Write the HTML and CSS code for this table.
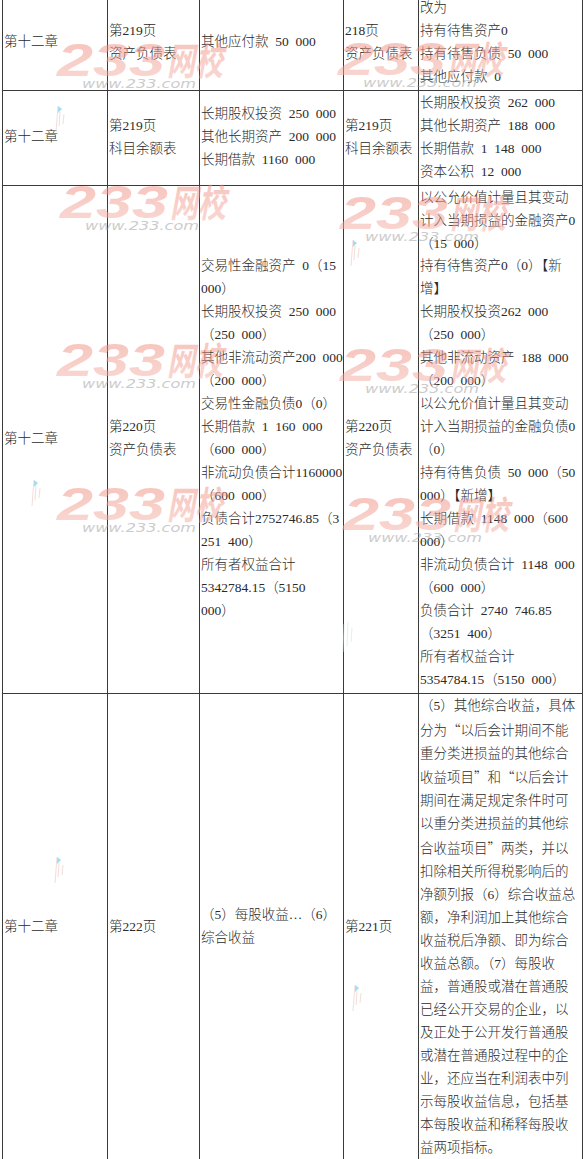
FILE: index.html
```html
<!DOCTYPE html>
<html lang="zh-CN">
<head>
<meta charset="utf-8">
<title>第十二章 勘误表</title>
<link rel="stylesheet" href="styles.css">
</head>
<body>
<div class="page">
  <table class="sheet">
    <colgroup>
      <col class="c-chapter">
      <col class="c-page">
      <col class="c-orig">
      <col class="c-page2">
      <col class="c-new">
    </colgroup>
    <tbody>
      <tr class="r1">
        <td>第十二章</td>
        <td>第219页<br>资产负债表</td>
        <td>其他应付款 50 000</td>
        <td>218页<br>资产负债表</td>
        <td>改为<br>持有待售资产0<br>持有待售负债 50 000<br>其他应付款 0</td>
      </tr>
      <tr class="r2">
        <td>第十二章</td>
        <td>第219页<br>科目余额表</td>
        <td>长期股权投资 250 000<br>其他长期资产 200 000<br>长期借款 1160 000</td>
        <td>第219页<br>科目余额表</td>
        <td>长期股权投资 262 000<br>其他长期资产 188 000<br>长期借款 1 148 000<br>资本公积 12 000</td>
      </tr>
      <tr class="r3">
        <td>第十二章</td>
        <td>第220页<br>资产负债表</td>
        <td>交易性金融资产 0（15<br>000）<br>长期股权投资 250 000<br>（250 000）<br>其他非流动资产200 000<br>（200 000）<br>交易性金融负债0（0）<br>长期借款 1 160 000<br>（600 000）<br>非流动负债合计1160000<br>（600 000）<br>负债合计2752746.85（3<br>251 400）<br>所有者权益合计<br>5342784.15（5150<br>000）</td>
        <td>第220页<br>资产负债表</td>
        <td>以公允价值计量且其变动<br>计入当期损益的金融资产0<br>（15 000）<br>持有待售资产0（0）【新<br>增】<br>长期股权投资262 000<br>（250 000）<br>其他非流动资产 188 000<br>（200 000）<br>以公允价值计量且其变动<br>计入当期损益的金融负债0<br>（0）<br>持有待售负债 50 000（50<br>000）【新增】<br>长期借款 1148 000（600<br>000）<br>非流动负债合计 1148 000<br>（600 000）<br>负债合计 2740 746.85<br>（3251 400）<br>所有者权益合计<br>5354784.15（5150 000）</td>
      </tr>
      <tr class="r4">
        <td>第十二章</td>
        <td>第222页</td>
        <td>（5）每股收益…（6）<br>综合收益</td>
        <td>第221页</td>
        <td>（5）其他综合收益，具体<br>分为<span class="q">“</span>以后会计期间不能<br>重分类进损益的其他综合<br>收益项目<span class="q">”</span>和<span class="q">“</span>以后会计<br>期间在满足规定条件时可<br>以重分类进损益的其他综<br>合收益项目<span class="q">”</span>两类，并以<br>扣除相关所得税影响后的<br>净额列报（6）综合收益总<br>额，净利润加上其他综合<br>收益税后净额、即为综合<br>收益总额。（7）每股收<br>益，普通股或潜在普通股<br>已经公开交易的企业，以<br>及正处于公开发行普通股<br>或潜在普通股过程中的企<br>业，还应当在利润表中列<br>示每股收益信息，包括基<br>本每股收益和稀释每股收<br>益两项指标。</td>
      </tr>
    </tbody>
  </table>

  <div class="overlay">
    <svg class="wm wm1" width="176" height="50" viewBox="0 0 176 50"><defs><linearGradient id="g1" x1="0" y1="0" x2="0" y2="1"><stop offset="0" stop-color="#ee8576"/><stop offset="1" stop-color="#f6b6ac"/></linearGradient></defs><text class="wm-big" x="2" y="34" textLength="108" lengthAdjust="spacingAndGlyphs" fill="url(#g1)">233</text><text class="wm-cn" x="112" y="33" textLength="56" lengthAdjust="spacingAndGlyphs" fill="url(#g1)">网校</text><text class="wm-url" x="27" y="46" textLength="114" lengthAdjust="spacingAndGlyphs">www.233.com</text></svg>
    <svg class="wm wm2" width="176" height="50" viewBox="0 0 176 50"><text class="wm-big" x="2" y="34" textLength="108" lengthAdjust="spacingAndGlyphs" fill="url(#g1)">233</text><text class="wm-cn" x="112" y="33" textLength="56" lengthAdjust="spacingAndGlyphs" fill="url(#g1)">网校</text><text class="wm-url" x="27" y="46" textLength="114" lengthAdjust="spacingAndGlyphs">www.233.com</text></svg>
    <svg class="wm wm3" width="176" height="50" viewBox="0 0 176 50"><text class="wm-big" x="2" y="34" textLength="108" lengthAdjust="spacingAndGlyphs" fill="url(#g1)">233</text><text class="wm-cn" x="112" y="33" textLength="56" lengthAdjust="spacingAndGlyphs" fill="url(#g1)">网校</text><text class="wm-url" x="27" y="46" textLength="114" lengthAdjust="spacingAndGlyphs">www.233.com</text></svg>
    <svg class="wm wm4" width="176" height="50" viewBox="0 0 176 50"><text class="wm-big" x="2" y="34" textLength="108" lengthAdjust="spacingAndGlyphs" fill="url(#g1)">233</text><text class="wm-cn" x="112" y="33" textLength="56" lengthAdjust="spacingAndGlyphs" fill="url(#g1)">网校</text><text class="wm-url" x="27" y="46" textLength="114" lengthAdjust="spacingAndGlyphs">www.233.com</text></svg>
    <svg class="wm wm5" width="176" height="50" viewBox="0 0 176 50"><text class="wm-big" x="2" y="34" textLength="108" lengthAdjust="spacingAndGlyphs" fill="url(#g1)">233</text><text class="wm-cn" x="112" y="33" textLength="56" lengthAdjust="spacingAndGlyphs" fill="url(#g1)">网校</text><text class="wm-url" x="27" y="46" textLength="114" lengthAdjust="spacingAndGlyphs">www.233.com</text></svg>
    <svg class="wm wm6" width="176" height="50" viewBox="0 0 176 50"><text class="wm-big" x="2" y="34" textLength="108" lengthAdjust="spacingAndGlyphs" fill="url(#g1)">233</text><text class="wm-cn" x="112" y="33" textLength="56" lengthAdjust="spacingAndGlyphs" fill="url(#g1)">网校</text><text class="wm-url" x="27" y="46" textLength="114" lengthAdjust="spacingAndGlyphs">www.233.com</text></svg>
    <svg class="wm wm7" width="176" height="50" viewBox="0 0 176 50"><text class="wm-big" x="2" y="34" textLength="108" lengthAdjust="spacingAndGlyphs" fill="url(#g1)">233</text><text class="wm-cn" x="112" y="33" textLength="56" lengthAdjust="spacingAndGlyphs" fill="url(#g1)">网校</text><text class="wm-url" x="27" y="46" textLength="114" lengthAdjust="spacingAndGlyphs">www.233.com</text></svg>
    <svg class="wm wm8" width="176" height="50" viewBox="0 0 176 50"><text class="wm-big" x="2" y="34" textLength="108" lengthAdjust="spacingAndGlyphs" fill="url(#g1)">233</text><text class="wm-cn" x="112" y="33" textLength="56" lengthAdjust="spacingAndGlyphs" fill="url(#g1)">网校</text><text class="wm-url" x="27" y="46" textLength="114" lengthAdjust="spacingAndGlyphs">www.233.com</text></svg>

    <svg class="flag f1" width="20" height="30" viewBox="0 0 20 30"><path d="M5 2 L9 5 L5 9 Z" fill="#7fd3ee"/><path d="M5 2 L3 28 M7 8 L6 22 M11 10 L10 20" stroke="#e9c8c2" stroke-width="0.8" fill="none"/></svg>
    <svg class="flag f2" width="20" height="30" viewBox="0 0 20 30"><path d="M5 2 L9 5 L5 9 Z" fill="#7fd3ee"/><path d="M5 2 L3 28 M7 8 L6 22 M11 10 L10 20" stroke="#e9c8c2" stroke-width="0.8" fill="none"/></svg>
    <svg class="flag f3" width="20" height="30" viewBox="0 0 20 30"><path d="M5 2 L9 5 L5 9 Z" fill="#7fd3ee"/><path d="M5 2 L3 28 M7 8 L6 22 M11 10 L10 20" stroke="#e9c8c2" stroke-width="0.8" fill="none"/></svg>
    <svg class="flag f4" width="20" height="34" viewBox="0 0 20 34"><path d="M4 4 L3 32 M8 2 L7 26 M12 8 L11 22" stroke="#cfe3ea" stroke-width="0.8" fill="none"/></svg>
    <svg class="flag f5" width="20" height="30" viewBox="0 0 20 30"><path d="M5 2 L9 5 L5 9 Z" fill="#7fd3ee"/><path d="M5 2 L3 28 M7 8 L6 22 M11 10 L10 20" stroke="#e9c8c2" stroke-width="0.8" fill="none"/></svg>
    <svg class="flag f6" width="20" height="30" viewBox="0 0 20 30"><path d="M5 2 L9 5 L5 9 Z" fill="#7fd3ee"/><path d="M5 2 L3 28 M7 8 L6 22 M11 10 L10 20" stroke="#e9c8c2" stroke-width="0.8" fill="none"/></svg>
  </div>
</div>
</body>
</html>
```
FILE: styles.css
```css
html, body {
  margin: 0;
  padding: 0;
  background: #ffffff;
}

body {
  font-family: "Liberation Serif", "Noto Sans CJK SC", serif;
  font-size: 13.5px;
  font-weight: 300;
  color: #2a2a2a;
  overflow: hidden;
}

.page {
  position: relative;
  width: 585px;
  margin-top: -5px;
  padding-left: 2px;
}

.sheet {
  border-collapse: collapse;
  table-layout: fixed;
  width: 580px;
}

.c-chapter { width: 105px; }
.c-page { width: 92px; }
.c-orig { width: 144px; }
.c-page2 { width: 75px; }
.c-new { width: 164px; }

.sheet td {
  border: 1px solid #3a3a3a;
  padding: 1px 1px;
  vertical-align: middle;
  text-align: left;
  line-height: 22.95px;
  white-space: nowrap;
  word-spacing: 3.4px;
  overflow: visible;
}

.q {
  font-family: "Noto Sans CJK SC", sans-serif;
  font-feature-settings: "fwid";
}

.overlay {
  position: absolute;
  left: 0;
  top: 5px;
  width: 585px;
  height: 1159px;
  pointer-events: none;
}

.wm {
  position: absolute;
  opacity: 0.5;
}

.wm-big {
  font-family: "Liberation Sans", sans-serif;
  font-weight: bold;
  font-style: italic;
  font-size: 46px;
}

.wm-cn {
  font-family: "Noto Sans CJK SC", sans-serif;
  font-weight: bold;
  font-style: italic;
  font-size: 38px;
}

.wm-url {
  font-family: "DejaVu Sans", sans-serif;
  font-style: italic;
  font-size: 12px;
  fill: #9a9a9a;
}

.wm1 { left: 55px; top: 42px; }
.wm2 { left: 336px; top: 41px; }
.wm3 { left: 58px; top: 184px; }
.wm4 { left: 338px; top: 195px; }
.wm5 { left: 55px; top: 342px; }
.wm6 { left: 338px; top: 347px; }
.wm7 { left: 55px; top: 486px; }
.wm8 { left: 341px; top: 496px; }

.flag {
  position: absolute;
  opacity: 0.75;
}

.f1 { left: 53px; top: 104px; }
.f2 { left: 348px; top: 238px; }
.f3 { left: 29px; top: 478px; }
.f4 { left: 340px; top: 620px; }
.f5 { left: 52px; top: 855px; }
.f6 { left: 350px; top: 983px; }
```
